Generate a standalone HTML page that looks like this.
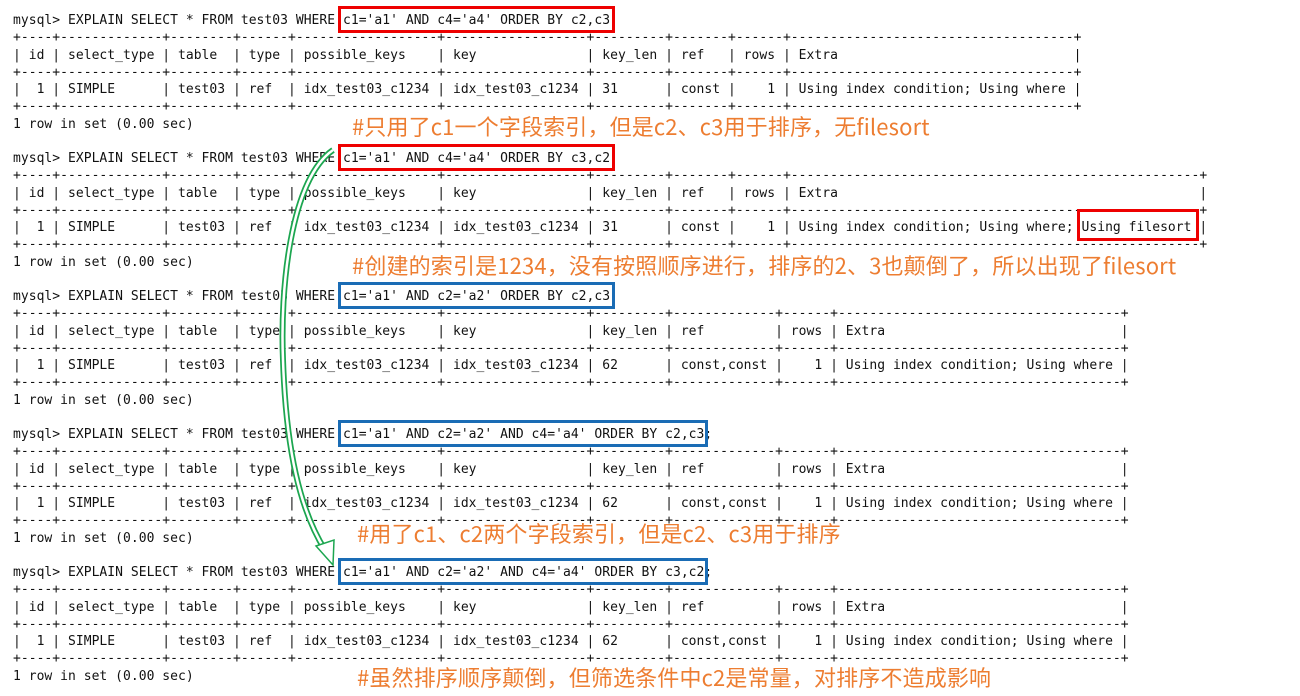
<!DOCTYPE html>
<html><head><meta charset="utf-8"><style>
body{margin:0;width:1300px;height:696px;background:#fff;position:relative;overflow:hidden}
pre{position:absolute;left:13px;top:12px;margin:0;font-family:"DejaVu Sans Mono","Liberation Mono",monospace;font-size:13px;letter-spacing:0.03px;line-height:17.25px;color:#111}
.n{position:absolute;color:#ED7D31;font-family:"Noto Sans CJK SC","WenQuanYi Zen Hei",sans-serif;font-size:22px;letter-spacing:0.15px;line-height:24px;white-space:nowrap}
.b{position:absolute;box-sizing:border-box;border:3px solid #e00}
.bl{border-color:#1a6cb5}
</style></head><body>
<pre>mysql&gt; EXPLAIN SELECT * FROM test03 WHERE c1='a1' AND c4='a4' ORDER BY c2,c3;
+----+-------------+--------+------+------------------+------------------+---------+-------+------+------------------------------------+
| id | select_type | table  | type | possible_keys    | key              | key_len | ref   | rows | Extra                              |
+----+-------------+--------+------+------------------+------------------+---------+-------+------+------------------------------------+
|  1 | SIMPLE      | test03 | ref  | idx_test03_c1234 | idx_test03_c1234 | 31      | const |    1 | Using index condition; Using where |
+----+-------------+--------+------+------------------+------------------+---------+-------+------+------------------------------------+
1 row in set (0.00 sec)

mysql&gt; EXPLAIN SELECT * FROM test03 WHERE c1='a1' AND c4='a4' ORDER BY c3,c2;
+----+-------------+--------+------+------------------+------------------+---------+-------+------+----------------------------------------------------+
| id | select_type | table  | type | possible_keys    | key              | key_len | ref   | rows | Extra                                              |
+----+-------------+--------+------+------------------+------------------+---------+-------+------+----------------------------------------------------+
|  1 | SIMPLE      | test03 | ref  | idx_test03_c1234 | idx_test03_c1234 | 31      | const |    1 | Using index condition; Using where; Using filesort |
+----+-------------+--------+------+------------------+------------------+---------+-------+------+----------------------------------------------------+
1 row in set (0.00 sec)

mysql&gt; EXPLAIN SELECT * FROM test03 WHERE c1='a1' AND c2='a2' ORDER BY c2,c3;
+----+-------------+--------+------+------------------+------------------+---------+-------------+------+------------------------------------+
| id | select_type | table  | type | possible_keys    | key              | key_len | ref         | rows | Extra                              |
+----+-------------+--------+------+------------------+------------------+---------+-------------+------+------------------------------------+
|  1 | SIMPLE      | test03 | ref  | idx_test03_c1234 | idx_test03_c1234 | 62      | const,const |    1 | Using index condition; Using where |
+----+-------------+--------+------+------------------+------------------+---------+-------------+------+------------------------------------+
1 row in set (0.00 sec)

mysql&gt; EXPLAIN SELECT * FROM test03 WHERE c1='a1' AND c2='a2' AND c4='a4' ORDER BY c2,c3;
+----+-------------+--------+------+------------------+------------------+---------+-------------+------+------------------------------------+
| id | select_type | table  | type | possible_keys    | key              | key_len | ref         | rows | Extra                              |
+----+-------------+--------+------+------------------+------------------+---------+-------------+------+------------------------------------+
|  1 | SIMPLE      | test03 | ref  | idx_test03_c1234 | idx_test03_c1234 | 62      | const,const |    1 | Using index condition; Using where |
+----+-------------+--------+------+------------------+------------------+---------+-------------+------+------------------------------------+
1 row in set (0.00 sec)

mysql&gt; EXPLAIN SELECT * FROM test03 WHERE c1='a1' AND c2='a2' AND c4='a4' ORDER BY c3,c2;
+----+-------------+--------+------+------------------+------------------+---------+-------------+------+------------------------------------+
| id | select_type | table  | type | possible_keys    | key              | key_len | ref         | rows | Extra                              |
+----+-------------+--------+------+------------------+------------------+---------+-------------+------+------------------------------------+
|  1 | SIMPLE      | test03 | ref  | idx_test03_c1234 | idx_test03_c1234 | 62      | const,const |    1 | Using index condition; Using where |
+----+-------------+--------+------+------------------+------------------+---------+-------------+------+------------------------------------+
1 row in set (0.00 sec)</pre>
<div class="b" style="left:338px;top:6px;width:277px;height:27px"></div>
<div class="b" style="left:338px;top:144px;width:277px;height:27px"></div>
<div class="b" style="left:1077px;top:209px;width:122px;height:32px"></div>
<div class="b bl" style="left:338px;top:282px;width:277px;height:27px"></div>
<div class="b bl" style="left:338px;top:420px;width:370px;height:27px"></div>
<div class="b bl" style="left:338px;top:558px;width:370px;height:27px"></div>
<div class="n" style="left:352px;top:114px">#只用了c1一个字段索引，但是c2、c3用于排序，无filesort</div>
<div class="n" style="left:352px;top:253px">#创建的索引是1234，没有按照顺序进行，排序的2、3也颠倒了，所以出现了filesort</div>
<div class="n" style="left:357px;top:521px">#用了c1、c2两个字段索引，但是c2、c3用于排序</div>
<div class="n" style="left:357px;top:665px">#虽然排序顺序颠倒，但筛选条件中c2是常量，对排序不造成影响</div>
<svg width="1300" height="696" style="position:absolute;left:0;top:0">
<path d="M333,150 C290,180 280,290 283,360 C286,450 300,510 325,550" fill="none" stroke="#1ca650" stroke-width="6"/>
<path d="M333,150 C290,180 280,290 283,360 C286,450 300,510 325,550" fill="none" stroke="#fff" stroke-width="2.5"/>
<polygon points="316,546 334,540 333,565" fill="#fff" stroke="#1ca650" stroke-width="1.5"/>
</svg>
</body></html>
